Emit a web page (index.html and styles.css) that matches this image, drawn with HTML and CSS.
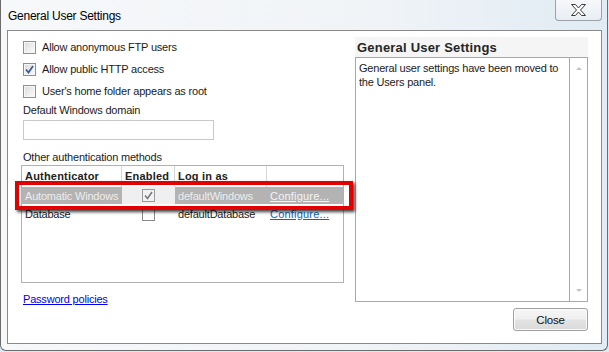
FILE: index.html
```html
<!DOCTYPE html>
<html>
<head>
<meta charset="utf-8">
<link rel="stylesheet" href="styles.css">
</head>
<body>
<div class="window">
  <div class="titlebar">
    <span class="title">General User Settings</span>
    <div class="close-x">
      <svg width="15" height="12" viewBox="0 0 15 12"><polygon points="0.5,0.5 4.5,0.5 7.5,4 10.5,0.5 14.5,0.5 9.5,6 14.5,11.5 10.5,11.5 7.5,8 4.5,11.5 0.5,11.5 5.5,6" fill="#fdfdfd" stroke="#3c3c3c" stroke-width="1" stroke-linejoin="round"/></svg>
    </div>
  </div>
  <div class="client">
    <div class="left">
      <div class="check-row"><span class="cb"></span><span>Allow anonymous FTP users</span></div>
      <div class="check-row"><span class="cb checked"><svg width="11" height="11" viewBox="0 0 11 11"><path d="M2 5.5 L4.5 8.5 L9 2" fill="none" stroke="#3c5a9a" stroke-width="1.8"/></svg></span><span>Allow public HTTP access</span></div>
      <div class="check-row"><span class="cb"></span><span>User's home folder appears as root</span></div>
      <div class="label label-domain">Default Windows domain</div>
      <div class="input"></div>
      <div class="label label-gap">Other authentication methods</div>
      <div class="grid">
        <div class="row head">
          <div class="c c1">Authenticator</div>
          <div class="c c2">Enabled</div>
          <div class="c c3">Log in as</div>
          <div class="c c4"></div>
        </div>
        <div class="row sel">
          <div class="c c1">Automatic Windows</div>
          <div class="c c2"><span class="cb small checked-gray"><svg width="11" height="11" viewBox="0 0 11 11"><path d="M2 5.5 L4.5 8.5 L9 2" fill="none" stroke="#7a7a7a" stroke-width="1.6"/></svg></span></div>
          <div class="c c3">defaultWindows</div>
          <div class="c c4"><span class="cfg">Configure...</span></div>
        </div>
        <div class="row">
          <div class="c c1">Database</div>
          <div class="c c2"><span class="cb small plain"></span></div>
          <div class="c c3">defaultDatabase</div>
          <div class="c c4"><span class="cfg blue">Configure...</span></div>
        </div>
        <div class="highlight"></div>
      </div>
      <a class="link">Password policies</a>
    </div>
    <div class="right">
      <div class="panel-head">General User Settings</div>
      <div class="textbox">
        <div class="text">General user settings have been moved to the Users panel.</div>
        <div class="scroll">
          <span class="arrow up"></span>
          <span class="arrow down"></span>
        </div>
      </div>
      <div class="btn-row"><div class="btn">Close</div></div>
    </div>
  </div>
</div>
</body>
</html>
```

FILE: styles.css
```css
html, body {
  margin: 0;
  padding: 0;
  width: 609px;
  height: 352px;
  overflow: hidden;
  background: #dfe9f2;
  font-family: "Liberation Sans", Arial, sans-serif;
  font-size: 11px;
  letter-spacing: -0.2px;
  color: #1b1b1b;
}

.window {
  box-sizing: border-box;
  width: 608px;
  height: 351px;
  border: 1px solid #6c6c6c;
  border-top: none;
  border-radius: 0 0 6px 6px;
  padding: 0 5px 6px 6px;
  background: linear-gradient(to right, #f6f8fa 0%, #f1f4f7 60%, #e0ebf4 100%);
  display: flex;
  flex-direction: column;
}

.titlebar {
  height: 30px;
  display: flex;
  justify-content: space-between;
  align-items: flex-start;
}

.title {
  font-size: 12px;
  letter-spacing: -0.25px;
  color: #000;
  padding: 9px 0 0 1px;
  line-height: 14px;
}

.close-x {
  box-sizing: border-box;
  width: 47px;
  height: 21px;
  border: 1px solid #9aa1a8;
  border-top: none;
  border-radius: 0 0 4px 4px;
  background: linear-gradient(to bottom, #f6f8fa, #e8eef4);
  display: flex;
  align-items: center;
  justify-content: center;
}

.client {
  flex: 1;
  border: 1px solid #8a8a8a;
  background: #fff;
  display: flex;
  padding: 0 12px 0 13px;
}

.left {
  width: 323px;
  display: flex;
  flex-direction: column;
  padding-top: 5px;
}

.check-row {
  height: 22px;
  display: flex;
  align-items: center;
  padding-left: 2px;
  gap: 6px;
}

.cb {
  box-sizing: border-box;
  width: 13px;
  height: 13px;
  border: 1px solid #8e8f8f;
  background: linear-gradient(135deg, #d9d9d9 0%, #ececec 50%, #fbfbfb 100%);
  box-shadow: inset 0 0 0 1px #f6f6f6;
  display: flex;
  align-items: center;
  justify-content: center;
}

.cb svg { display: block; }

.cb.small.plain {
  background: #fff;
  box-shadow: none;
  border-color: #8a8a8a;
}

.cb.checked-gray {
  background: #f2f2f2;
  box-shadow: none;
  border-color: #9a9a9a;
}

.label {
  line-height: 15px;
  padding-left: 2px;
  color: #1b1b1b;
}

.label-domain {
  margin-top: 1px;
}

.label-gap {
  margin-top: 10px;
}

.input {
  box-sizing: border-box;
  margin: 2px 0 0 2px;
  width: 191px;
  height: 20px;
  border: 1px solid #c9c9c9;
  background: #fff;
}

.grid {
  position: relative;
  box-sizing: border-box;
  height: 118px;
  border: 1px solid #b1b1b1;
}

.row {
  display: flex;
  height: 18px;
  align-items: center;
}

.row.head {
  height: 21px;
  font-weight: bold;
  letter-spacing: 0.2px;
  color: #222;
}

.c {
  box-sizing: border-box;
  height: 100%;
  display: flex;
  align-items: center;
  padding-left: 3px;
  white-space: nowrap;
}

.head .c { padding-bottom: 2px; }

.c1 { width: 100px; }
.c2 { width: 53px; justify-content: center; padding-left: 0; }
.c3 { width: 92px; }
.c4 { flex: 1; }

.head .c1, .head .c2, .head .c3 {
  border-right: 1px solid #d6d6d6;
}
.head .c2 { justify-content: flex-start; padding-left: 3px; }

.row.sel {
  height: 17px;
  margin-bottom: 1px;
}

.sel .c1, .sel .c3, .sel .c4 {
  background: #b3b3b3;
  color: #ededed;
}
.sel .c2 {
  background: #efefef;
}

.cfg {
  text-decoration: underline;
  letter-spacing: 0.2px;
}
.sel .cfg { color: #f4f4f4; }
.cfg.blue { color: #0b63c5; }

.highlight {
  position: absolute;
  left: -7px;
  top: 15px;
  width: 338px;
  height: 29px;
  box-sizing: border-box;
  border: 4px solid #e20000;
  box-shadow: 2px 2px 3px rgba(0, 0, 0, 0.75);
}

.link {
  margin-top: 9px;
  padding-left: 2px;
  line-height: 15px;
  color: #0000ee;
  text-decoration: underline;
}

.right {
  margin-left: 11px;
  width: 233px;
  display: flex;
  flex-direction: column;
  padding-top: 6px;
}

.panel-head {
  height: 20px;
  background: #f5f5f5;
  font-size: 13px;
  font-weight: bold;
  letter-spacing: 0.2px;
  color: #262626;
  padding-left: 2px;
  display: flex;
  align-items: center;
}

.textbox {
  box-sizing: border-box;
  height: 245px;
  border: 1px solid #a8a8a8;
  display: flex;
}

.text {
  flex: 1;
  padding: 3px 3px 0 3px;
  line-height: 14px;
  color: #1b1b1b;
}

.scroll {
  width: 17px;
  border-left: 1px solid #a8a8a8;
  display: flex;
  flex-direction: column;
  justify-content: space-between;
  align-items: center;
  padding: 9px 0 9px 0;
}

.arrow {
  width: 0;
  height: 0;
  border-left: 3px solid transparent;
  border-right: 3px solid transparent;
}
.arrow.up { border-bottom: 3px solid #c4c4c4; }
.arrow.down { border-top: 3px solid #c4c4c4; }

.btn-row {
  display: flex;
  justify-content: flex-end;
  margin-top: 6px;
}

.btn {
  box-sizing: border-box;
  width: 75px;
  height: 23px;
  border: 1px solid #a0a0a0;
  border-radius: 3px;
  background: linear-gradient(to bottom, #f6f6f6 0%, #efefef 48%, #e3e3e3 52%, #dadada 100%);
  box-shadow: inset 0 0 0 1px #fbfbfb;
  display: flex;
  align-items: center;
  justify-content: center;
  color: #111;
  font-size: 11.5px;
}
```
